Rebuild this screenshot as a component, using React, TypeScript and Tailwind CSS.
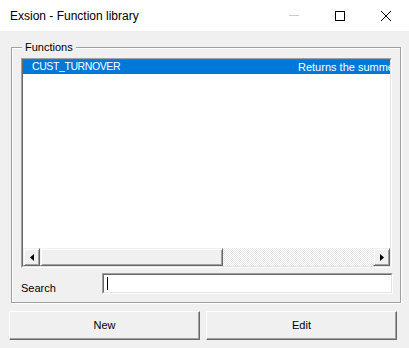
import React from "react";

const sans = "font-['Liberation_Sans',Arial,sans-serif]";

function TitleBar() {
  return (
    <div className="flex h-[31px] items-center bg-white">
      <span className="flex-1 pl-[10px] text-[12px] text-black">Exsion - Function library</span>
      <div className="flex h-full w-[46px] items-center justify-center">
        <div className="h-px w-[10px] bg-[#cccccc]" />
      </div>
      <div className="flex h-full w-[46px] items-center justify-center">
        <div className="h-[10px] w-[10px] border border-black" />
      </div>
      <div className="flex h-full w-[46px] items-center justify-center">
        <svg width="10" height="10" viewBox="0 0 10 10">
          <path d="M0 0L10 10M10 0L0 10" stroke="#000" strokeWidth="1" />
        </svg>
      </div>
    </div>
  );
}

function Sunken({ className, children }: { className?: string; children: React.ReactNode }) {
  return (
    <div
      className={`border border-t-[#a0a0a0] border-l-[#a0a0a0] border-b-white border-r-white ${className ?? ""}`}
    >
      <div className="flex h-full w-full flex-col border border-t-[#696969] border-l-[#696969] border-b-[#e3e3e3] border-r-[#e3e3e3] bg-white">
        {children}
      </div>
    </div>
  );
}

function ScrollButton({ dir }: { dir: "left" | "right" }) {
  return (
    <div className="flex h-[18px] w-[17px] shrink-0 items-center justify-center border border-t-[#f0f0f0] border-l-[#f0f0f0] border-b-[#696969] border-r-[#696969] bg-[#f0f0f0] shadow-[inset_1px_1px_0_#fff,inset_-1px_-1px_0_#a0a0a0]">
      <svg width="4" height="7" viewBox="0 0 4 7">
        {dir === "left" ? <path d="M4 0V7L0 3.5Z" fill="#000" /> : <path d="M0 0V7L4 3.5Z" fill="#000" />}
      </svg>
    </div>
  );
}

function RaisedButton({ label }: { label: string }) {
  return (
    <button
      type="button"
      className={`flex h-[29px] w-[191px] items-center justify-center border border-t-white border-l-white border-b-[#696969] border-r-[#696969] bg-[#f0f0f0] text-[11px] text-black shadow-[inset_-1px_-1px_0_#a0a0a0] ${sans}`}
    >
      {label}
    </button>
  );
}

export default function App() {
  return (
    <div className={`flex h-[348px] w-[409px] flex-col bg-[#f0f0f0] ${sans}`}>
      <TitleBar />
      <div className="flex flex-1 flex-col px-[9px] pt-[16px]">
        <div className="relative ml-[2px] h-[256px] w-[390px] border border-[#a0a0a0] shadow-[inset_1px_1px_0_#fff,1px_1px_0_#fff]">
          <span className="absolute top-[-8px] left-[10px] bg-[#f0f0f0] px-[3px] text-[11px] leading-[14px] text-black">
            Functions
          </span>
          <div className="flex flex-col pt-[10px] pl-[9px]">
            <Sunken className="h-[210px] w-[371px]">
              <div className="flex-1 overflow-hidden">
                <div className="flex h-[14px] w-[420px] items-center bg-[#0078d7] text-[11px] whitespace-nowrap text-white">
                  <span className="w-[275px] shrink-0 pl-[9px] text-[10.5px] tracking-[-0.4px]">CUST_TURNOVER</span>
                  <span className="shrink-0">Returns the summed turnover</span>
                </div>
              </div>
              <div className="flex h-[18px]">
                <ScrollButton dir="left" />
                <div className="h-[18px] w-[183px] shrink-0 border border-t-[#f0f0f0] border-l-[#f0f0f0] border-b-[#696969] border-r-[#696969] bg-[#f0f0f0] shadow-[inset_1px_1px_0_#fff,inset_-1px_-1px_0_#a0a0a0]" />
                <div className="h-[18px] flex-1 bg-[repeating-conic-gradient(#e6e6e6_0_25%,#ffffff_0_50%)] bg-[length:2px_2px]" />
                <ScrollButton dir="right" />
              </div>
            </Sunken>
            <div className="mt-[5px] flex items-start">
              <span className="w-[81px] pt-[8px] text-[11px] leading-[14px] text-black">Search</span>
              <Sunken className="h-[21px] w-[291px]">
                <div className="ml-[3px] mt-[2px] h-[13px] w-px bg-black" />
              </Sunken>
            </div>
          </div>
        </div>
        <div className="mt-[8px] flex gap-[6px]">
          <RaisedButton label="New" />
          <RaisedButton label="Edit" />
        </div>
      </div>
    </div>
  );
}
